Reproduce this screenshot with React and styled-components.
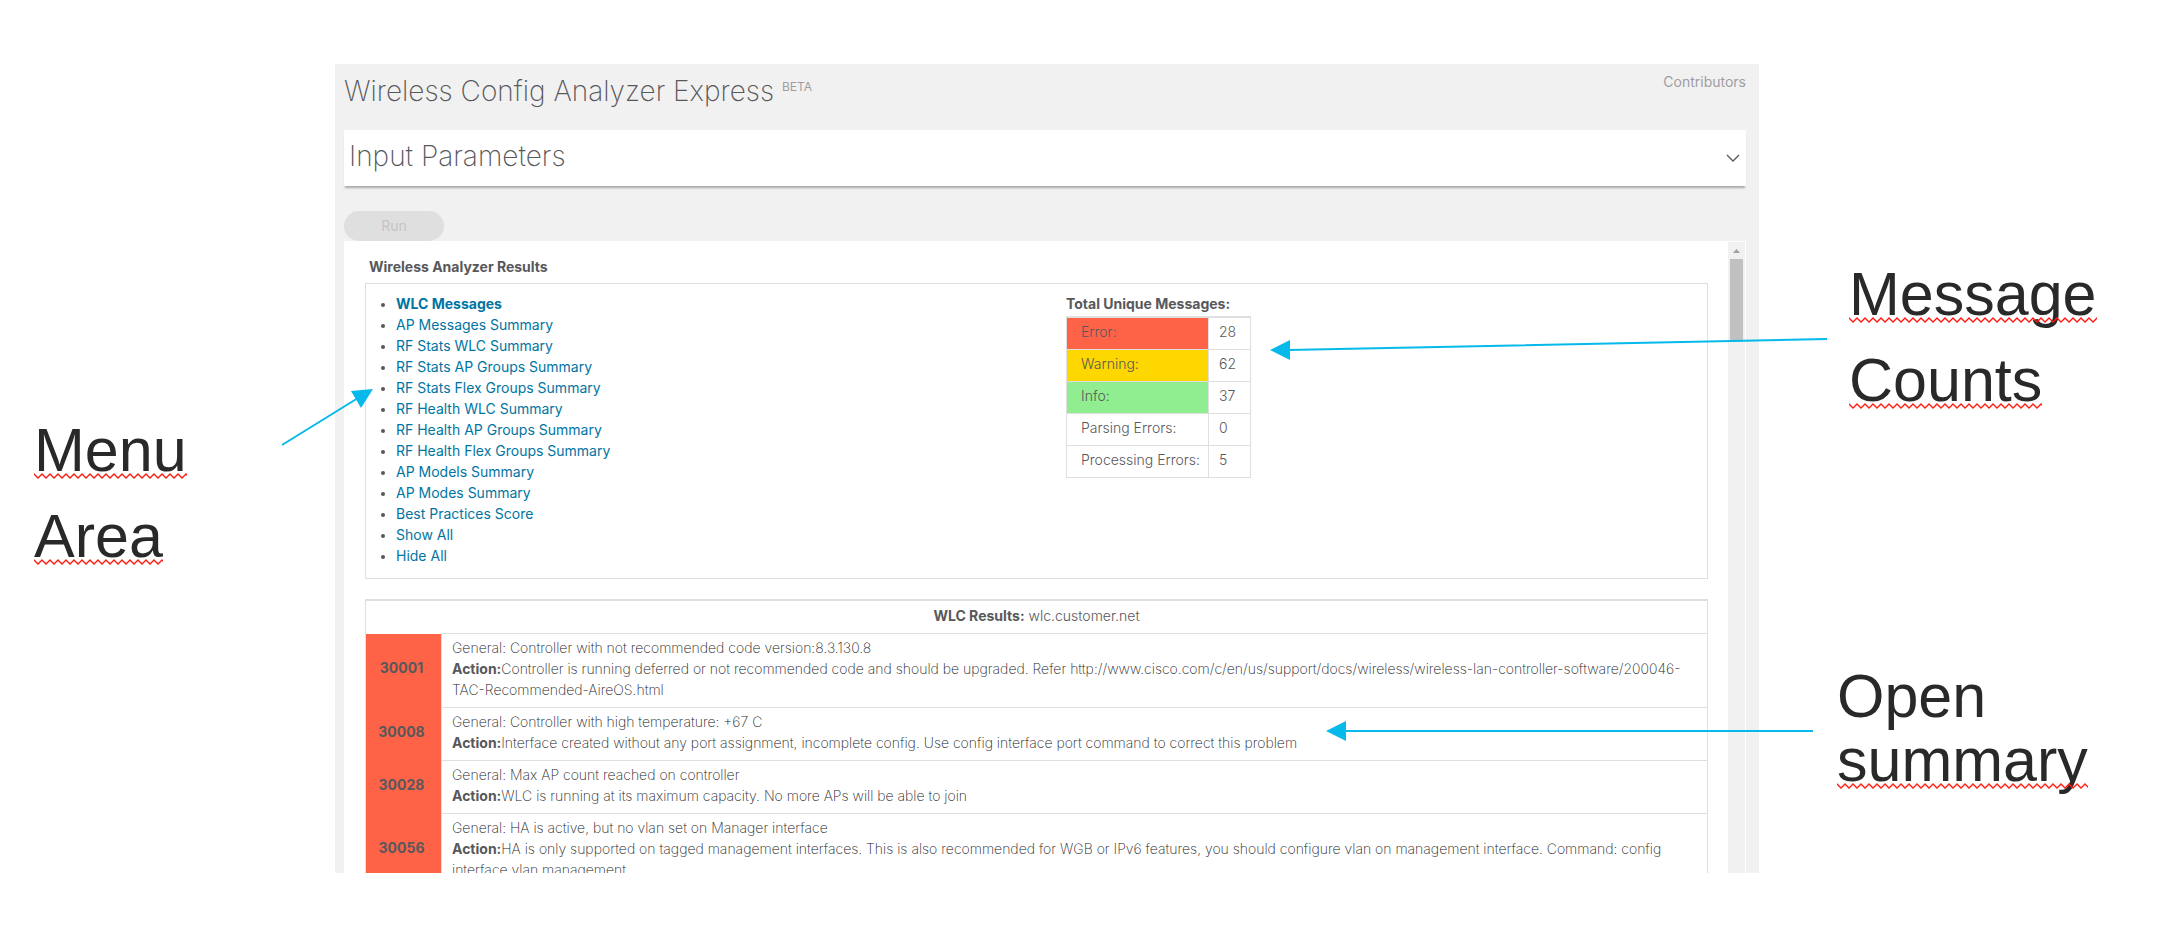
import React from 'react'
import styled, { createGlobalStyle } from 'styled-components'

const menuItems = [
  'WLC Messages',
  'AP Messages Summary',
  'RF Stats WLC Summary',
  'RF Stats AP Groups Summary',
  'RF Stats Flex Groups Summary',
  'RF Health WLC Summary',
  'RF Health AP Groups Summary',
  'RF Health Flex Groups Summary',
  'AP Models Summary',
  'AP Modes Summary',
  'Best Practices Score',
  'Show All',
  'Hide All',
]

const counts = [
  { label: 'Error:', value: 28, color: '#ff6347' },
  { label: 'Warning:', value: 62, color: '#ffd700' },
  { label: 'Info:', value: 37, color: '#90ee90' },
  { label: 'Parsing Errors:', value: 0 },
  { label: 'Processing Errors:', value: 5 },
]

const results = [
  {
    id: '30001',
    general: 'Controller with not recommended code version:8.3.130.8',
    action:
      'Controller is running deferred or not recommended code and should be upgraded. Refer http://www.cisco.com/c/en/us/support/docs/wireless/wireless-lan-controller-software/200046-TAC-Recommended-AireOS.html',
  },
  {
    id: '30008',
    general: 'Controller with high temperature: +67 C',
    action:
      'Interface created without any port assignment, incomplete config. Use config interface port command to correct this problem',
  },
  {
    id: '30028',
    general: 'Max AP count reached on controller',
    action: 'WLC is running at its maximum capacity. No more APs will be able to join',
  },
  {
    id: '30056',
    general: 'HA is active, but no vlan set on Manager interface',
    action:
      'HA is only supported on tagged management interfaces. This is also recommended for WGB or IPv6 features, you should configure vlan on management interface. Command: config interface vlan management',
  },
]

function App() {
  return (
    <>
      <GlobalStyle />
      <Page>
        <LeftNotes>
          <Note $line={86}>
            <Misspelt>Menu</Misspelt>
            <Misspelt>Area</Misspelt>
          </Note>
        </LeftNotes>

        <Panel>
          <Header>
            <Title>
              Wireless Config Analyzer Express <Beta>BETA</Beta>
            </Title>
            <Contributors href="#contributors">Contributors</Contributors>
          </Header>

          <InputBar type="button" aria-expanded="false">
            <span>Input Parameters</span>
            <Chevron viewBox="0 0 14 8" aria-hidden="true">
              <path d="M1 1l6 6 6-6" />
            </Chevron>
          </InputBar>

          <RunButton type="button" disabled>Run</RunButton>

          <Viewport>
            <Results>
              <ResultsTitle>Wireless Analyzer Results</ResultsTitle>
              <SummaryBox>
                <Menu>
                  {menuItems.map((item, i) => (
                    <MenuItem key={item}>
                      <MenuLink href="#results" $active={i === 0}>{item}</MenuLink>
                    </MenuItem>
                  ))}
                </Menu>
                <div>
                  <TotalsTitle id="totals">Total Unique Messages:</TotalsTitle>
                  <CountTable aria-labelledby="totals">
                    <tbody>
                      {counts.map((row) => (
                        <tr key={row.label}>
                          <CountLabel scope="row" $color={row.color}>{row.label}</CountLabel>
                          <CountValue>{row.value}</CountValue>
                        </tr>
                      ))}
                    </tbody>
                  </CountTable>
                </div>
              </SummaryBox>

              <ResultTable id="results">
                <thead>
                  <tr>
                    <ResultHead colSpan={2}>
                      <b>WLC Results:</b> wlc.customer.net
                    </ResultHead>
                  </tr>
                </thead>
                <tbody>
                  {results.map((row) => (
                    <tr key={row.id}>
                      <ResultId scope="row">{row.id}</ResultId>
                      <ResultText>
                        General: {row.general}
                        <br />
                        <b>Action:</b>{row.action}
                      </ResultText>
                    </tr>
                  ))}
                </tbody>
              </ResultTable>
            </Results>
            <ScrollTrack>
              <ScrollArrow viewBox="0 0 7 4" aria-hidden="true">
                <path d="M0 4L3.5 0L7 4z" />
              </ScrollArrow>
              <ScrollThumb />
            </ScrollTrack>
          </Viewport>
        </Panel>

        <RightNotes>
          <Note $line={86} $indent>
            <Misspelt>Message</Misspelt>
            <Misspelt>Counts</Misspelt>
          </Note>
          <Note $line={64}>
            <span>Open</span>
            <Misspelt>summary</Misspelt>
          </Note>
        </RightNotes>

        {/* callout arrows drawn over the panel */}
        <Arrows viewBox="0 0 2164 942" aria-hidden="true">
          <path d="M282 445L358 398M1827 339L1288 350M1813 731H1344" />
          <polygon points="373,389 351,391 361,408" />
          <polygon points="1270,350 1290,340 1290,360" />
          <polygon points="1326,731 1346,721 1346,741" />
        </Arrows>
      </Page>
    </>
  )
}

const GlobalStyle = createGlobalStyle`
  * {
    box-sizing: border-box;
  }
  body {
    margin: 0;
    background: #fff;
    color: #58585b;
    font-family: Inter, "Liberation Sans", sans-serif;
    font-size: 14px;
    line-height: 21px;
  }
  b {
    color: #58585b;
    font-weight: 700;
  }
`;

const Page = styled.main`
  position: relative;
  display: grid;
  grid-template-columns: minmax(0, 335fr) minmax(0, 1424fr) minmax(0, 405fr);
  padding: 64px 0 69px;
`;

const LeftNotes = styled.aside`
  padding: 343px 0 0 34px;
`;

const RightNotes = styled.aside`
  display: flex;
  flex-direction: column;
  gap: 241px;
  padding: 187px 0 0 78px;
`;

const Note = styled.div`
  display: flex;
  flex-direction: column;
  align-items: flex-start;
  padding-left: ${(p) => (p.$indent ? '12px' : '0')};
  color: #292929;
  font-family: "Liberation Sans", Arial, sans-serif;
  font-size: 61px;
  line-height: ${(p) => p.$line}px;
`;

const Misspelt = styled.span`
  position: relative;
  &::after {
    content: "";
    position: absolute;
    left: 0;
    right: 0;
    /* sits just under the baseline whatever the line height */
    top: calc(50% + 23px);
    height: 6px;
    background: url("data:image/svg+xml,%3Csvg xmlns='http://www.w3.org/2000/svg' width='8' height='6'%3E%3Cpath d='M-1 0L0 1L4 5L8 1L9 0' fill='none' stroke='%23ff1a10' stroke-width='1.3'/%3E%3C/svg%3E") repeat-x;
  }
`;

const Panel = styled.section`
  padding: 0 13px 0 9px;
  background: #f1f1f1;
`;

const Header = styled.header`
  display: flex;
  justify-content: space-between;
  height: 66px;
  padding-top: 7px;
`;

const Title = styled.h1`
  margin: 0;
  font-size: 28px;
  font-weight: 200;
  line-height: 40px;
`;

const Beta = styled.sup`
  color: #9e9ea2;
  font-size: 12px;
  font-weight: 400;
  line-height: 12px;
`;

const Contributors = styled.a`
  color: #9e9ea2;
  text-decoration: none;
`;

const InputBar = styled.button`
  display: flex;
  align-items: center;
  justify-content: space-between;
  width: 100%;
  height: 56px;
  padding: 0 6px 0 5px;
  border: 0;
  background: #fff;
  box-shadow: 0 3px 2px -1px #a8a8a8;
  color: inherit;
  font-family: inherit;
  font-size: 28px;
  font-weight: 200;
  span {
    padding-bottom: 5px;
  }
`;

const Chevron = styled.svg`
  width: 14px;
  height: 8px;
  fill: none;
  stroke: #58585b;
  stroke-width: 1.3;
`;

const RunButton = styled.button`
  display: block;
  width: 100px;
  height: 30px;
  margin-top: 25px;
  padding: 0 0 2px;
  border: 0;
  border-radius: 15px;
  background: #dfdfdf;
  color: #c4c4c6;
  font-family: inherit;
  font-size: 14px;
`;

const Viewport = styled.div`
  display: flex;
  gap: 20px;
  height: 632px;
  padding: 0 1px 0 21px;
  overflow: hidden;
  background: #fff;
`;

const Results = styled.div`
  flex: 1;
  min-width: 0;
  padding-top: 15px;
`;

const ResultsTitle = styled.h2`
  margin: 0 0 6px 4px;
  font-size: 14px;
  font-weight: 700;
  line-height: 21px;
`;

const SummaryBox = styled.div`
  display: flex;
  align-items: flex-start;
  height: 296px;
  padding-top: 9px;
  border: 1px solid #dfdfdf;
`;

const Menu = styled.ul`
  width: 700px;
  margin: 0;
  padding-left: 30px;
`;

const MenuItem = styled.li`
  &::marker {
    font-size: 12px;
  }
`;

const MenuLink = styled.a`
  color: #0175a2;
  font-weight: ${(p) => (p.$active ? 700 : 400)};
  text-decoration: none;
`;

const TotalsTitle = styled.div`
  padding-bottom: 2px;
  font-weight: 700;
`;

const CountTable = styled.table`
  border-collapse: collapse;
  border: 1px solid #dfdfdf;
  border-top-width: 2px;
  font-weight: 300;
`;

const CountLabel = styled.th`
  width: 142px;
  height: 32px;
  padding: 3px 0 7px 14px;
  border: 1px solid #dfdfdf;
  background: ${(p) => p.$color || 'none'};
  font-weight: 300;
  text-align: left;
`;

const CountValue = styled.td`
  width: 42px;
  padding: 3px 0 7px 10px;
  border: 1px solid #dfdfdf;
`;

const ResultTable = styled.table`
  width: 100%;
  margin-top: 20px;
  border-collapse: collapse;
  border: 1px solid #dfdfdf;
  border-top-width: 2px;
`;

const ResultHead = styled.th`
  padding: 4px 0 7px;
  font-weight: 300;
  text-align: center;
`;

const ResultId = styled.th`
  width: 76px;
  padding: 2px 4px 8px 0;
  background: #ff6347;
  font-weight: 700;
`;

const ResultText = styled.td`
  padding: 3px 4px 7px 10px;
  border: 1px solid #dfdfdf;
  color: #242428;
  font-weight: 200;
`;

const ScrollTrack = styled.div`
  display: flex;
  flex-direction: column;
  align-items: center;
  gap: 6px;
  width: 17px;
  margin-top: 1px;
  padding-top: 7px;
  background: #f1f1f1;
`;

const ScrollArrow = styled.svg`
  width: 7px;
  height: 4px;
  fill: #a0a0a0;
`;

const ScrollThumb = styled.div`
  width: 13px;
  height: 83px;
  background: #c1c1c1;
`;

const Arrows = styled.svg`
  position: absolute;
  top: 0;
  left: 0;
  width: 100%;
  pointer-events: none;
  fill: #05b9ea;
  path {
    stroke: #05b9ea;
    stroke-width: 2;
  }
`;

export default App
